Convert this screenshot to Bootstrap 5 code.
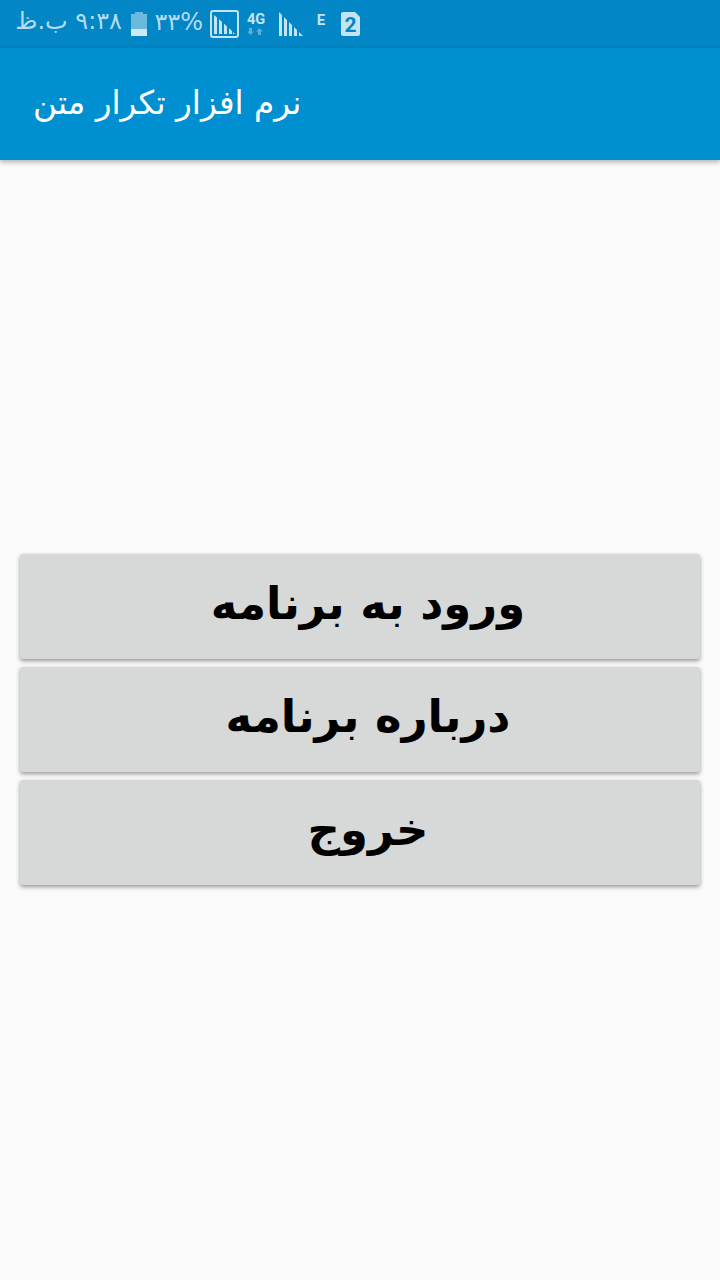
<!doctype html>
<html lang="fa"><head><meta charset="utf-8">
<link href="https://cdn.jsdelivr.net/npm/bootstrap@5.3.0/dist/css/bootstrap.min.css" rel="stylesheet">
<style>
body{background:#fafafa;font-family:"DejaVu Sans","Noto Sans",sans-serif;width:720px;height:1280px;overflow:hidden}
.sbar{height:48px;background:#0286c5;color:#b3dcf0;font-size:24px;padding:0 0 0 17px}
.sbar svg{display:block;flex:none;overflow:visible}
.t-clock{width:105px;direction:rtl;white-space:nowrap;margin-right:9px;text-align:left;margin-top:-6px}
.t-pct{width:48px;margin:-4px 7px 0 8px;direction:rtl;white-space:nowrap}
.gap-4g{margin-left:7px}
.gap-sig{margin-left:13px}
.gap-e{margin-left:14px;margin-top:-9px}
.gap-sim{margin-left:16px}
.abar{height:112px;background:#008fd1;color:#fff;font-size:32.7px;padding:0 0 0 33px;box-shadow:0 2px 5px rgba(0,0,0,.3);position:relative;direction:rtl;justify-content:flex-end}
.stage{height:1120px;padding:0 20px;margin-top:-1px}
.bigbtn{height:105px;background:#d7d8d8;border-radius:3px;border:0;color:#000;font-size:45px;font-weight:700;box-shadow:0 2px 4px rgba(0,0,0,.4);width:100%;line-height:1;padding:0 0 6px 16px;direction:rtl}
</style></head><body>
<div class="sbar d-flex align-items-center">
<span class="t-clock">۹:۳۸ ب.ظ</span>
<svg width="16" height="24" viewBox="0 0 16 24"><path fill="#6cb9de" d="M4 0h8v2h4v15H0V2h4z"/><rect fill="#cfe8f5" y="17" width="16" height="7"/></svg>
<span class="t-pct">۳۳%</span>
<svg width="29" height="28" viewBox="0 0 29 28" fill="#c5e4f3"><rect x="1" y="1" width="27" height="26" rx="2" fill="none" stroke="#c5e4f3" stroke-width="2"/><path d="M4 5l3 2.500V24H4zM9 9l3 3v12H9zM14 13.500l3 3V24h-3zM19 18l3 3v3h-3zM23 22l2 2h-2z"/></svg>
<svg class="gap-4g" width="20" height="22" viewBox="0 0 20 22"><text x="10" y="11" text-anchor="middle" font-family="Roboto" font-weight="700" font-size="14.500" fill="#c5e4f3">4G</text><path fill="#5aaed8" d="M3 15h3v3.500h2L4.500 22 1 18.500h2z"/><path fill="#5aaed8" d="M12 22v-3.500h-2l3.500-3.500 3.500 3.500h-2V22z"/></svg>
<svg class="gap-sig" width="24" height="24" viewBox="0 0 24 24" fill="#c5e4f3"><path d="M0 0l3 3v21H0zM5 5l3 3v16H5zM10 10l3 3v11h-3zM15 15l3 3v6h-3zM20 20l4 4h-4z"/></svg>
<svg class="gap-e" width="8" height="12" viewBox="0 0 8 12"><text x="4" y="11" text-anchor="middle" font-family="Roboto" font-weight="700" font-size="15" fill="#c5e4f3">E</text></svg>
<svg class="gap-sim" width="19" height="24" viewBox="0 0 19 24"><path fill="#c5e4f3" d="M2 0h12l5 5v17a2 2 0 0 1-2 2H2a2 2 0 0 1-2-2V2a2 2 0 0 1 2-2z"/><text x="9.500" y="20" text-anchor="middle" font-family="Roboto" font-weight="700" font-size="21" fill="#0286c5">2</text></svg>
</div>
<div class="abar d-flex align-items-center">نرم افزار تکرار متن</div>
<div class="stage d-flex flex-column justify-content-center gap-2">
<button class="bigbtn">ورود به برنامه</button>
<button class="bigbtn">درباره برنامه</button>
<button class="bigbtn">خروج</button>
</div>
<script src="https://cdn.jsdelivr.net/npm/bootstrap@5.3.0/dist/js/bootstrap.bundle.min.js"></script>
</body></html>
